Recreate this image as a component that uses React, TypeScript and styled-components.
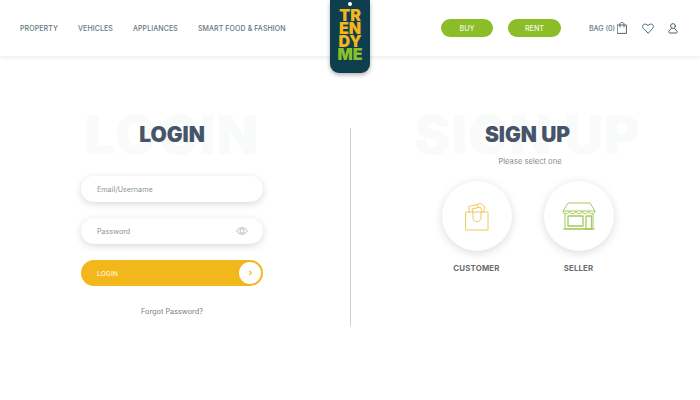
import React from "react";
import styled, { createGlobalStyle } from "styled-components";

const GlobalStyle = createGlobalStyle`
  html, body {
    margin: 0;
    padding: 0;
    background: #fff;
    font-family: "Inter", "Liberation Sans", sans-serif;
  }
`;

const Page = styled.div`
  width: 700px;
  height: 400px;
  overflow: hidden;
  position: relative;
  background: #fff;
`;

const Header = styled.header`
  height: 56px;
  display: flex;
  align-items: center;
  padding: 0 20px;
  box-shadow: 0 2px 4px rgba(30, 40, 50, 0.08);
`;

const Nav = styled.nav`
  display: flex;
  gap: 20px;
  width: 421px;
  flex: none;
`;

const NavLink = styled.span`
  font-size: 7px;
  font-weight: 500;
  color: #647680;
  letter-spacing: 0.1px;
  white-space: nowrap;
`;

const Tag = styled.div`
  position: absolute;
  left: 330px;
  top: 0;
  width: 40px;
  height: 73px;
  background: #0f3f4f;
  border-radius: 0 0 9px 9px;
  box-shadow: 0 2px 4px rgba(0, 0, 0, 0.3);
  display: flex;
  flex-direction: column;
  align-items: center;
  padding-top: 2px;
  box-sizing: border-box;
`;

const TagHole = styled.span`
  width: 4px;
  height: 4px;
  border-radius: 50%;
  background: #fff;
  margin-bottom: 3px;
`;

const TagLine = styled.span<{ $green?: boolean }>`
  font-size: 16px;
  line-height: 13px;
  font-weight: 900;
  letter-spacing: 0;
  color: ${(p) => (p.$green ? "#8cc02b" : "#f3b71b")};
`;

const PillButton = styled.div<{ $width: number; $gap: number }>`
  width: ${(p) => p.$width}px;
  height: 18px;
  flex: none;
  margin-right: ${(p) => p.$gap}px;
  border-radius: 9px;
  background: #8abd26;
  color: #f4f8e6;
  font-size: 7.2px;
  font-weight: 500;
  display: flex;
  align-items: center;
  justify-content: center;
`;

const Bag = styled.span`
  width: 26px;
  flex: none;
  font-size: 7px;
  font-weight: 500;
  color: #647680;
  margin-right: 2px;
  white-space: nowrap;
`;

const HeaderIcon = styled.svg<{ $gap?: number }>`
  display: block;
  flex: none;
  margin-right: ${(p) => p.$gap ?? 0}px;
  fill: none;
  stroke: #4b6673;
  stroke-width: 1;
  stroke-linecap: round;
  stroke-linejoin: round;
`;

const Main = styled.main`
  display: grid;
  grid-template-columns: 350px 1px 1fr;
  padding-top: 72px;
`;

const Divider = styled.div`
  width: 1px;
  height: 198px;
  background: #cfd2d5;
`;

const LoginColumn = styled.section`
  display: flex;
  flex-direction: column;
  align-items: center;
  padding-right: 6px;
`;

const SignupColumn = styled.section`
  display: flex;
  flex-direction: column;
  align-items: center;
  padding-left: 4px;
`;

const TitleBlock = styled.div`
  position: relative;
  height: 14px;
  display: flex;
  align-items: center;
  justify-content: center;
`;

const GhostTitle = styled.span`
  position: absolute;
  left: 50%;
  top: 50%;
  transform: translate(-50%, -50%);
  font-size: 54px;
  line-height: 40px;
  font-weight: 900;
  letter-spacing: 1px;
  color: #f9fafa;
  white-space: nowrap;
`;

const Title = styled.h1`
  position: relative;
  margin: 0;
  font-size: 21px;
  line-height: 14px;
  font-weight: 900;
  color: #46546a;
  letter-spacing: 0;
  white-space: nowrap;
`;

const Field = styled.div<{ $top: number }>`
  width: 182px;
  height: 26px;
  box-sizing: border-box;
  padding: 0 15px 0 16px;
  border-radius: 13px;
  background: #fff;
  box-shadow: 0 2px 7px rgba(40, 50, 60, 0.18);
  display: flex;
  align-items: center;
  justify-content: space-between;
  font-size: 7.2px;
  color: #8a959a;
  margin-top: ${(p) => p.$top}px;
`;

const LoginButton = styled.div`
  width: 182px;
  height: 26px;
  margin-top: 16px;
  box-sizing: border-box;
  padding: 0 2px 0 16px;
  border-radius: 13px;
  background: #f2b71a;
  color: #fdf3d2;
  font-size: 6.8px;
  font-weight: 500;
  display: flex;
  align-items: center;
  justify-content: space-between;
`;

const ArrowCircle = styled.span`
  width: 22px;
  height: 22px;
  border-radius: 50%;
  background: #fff;
  display: flex;
  align-items: center;
  justify-content: center;
`;

const Forgot = styled.div`
  margin-top: 21px;
  font-size: 7.3px;
  color: #7a8184;
`;

const Hint = styled.div`
  margin-top: 15px;
  padding-left: 5px;
  font-size: 7.6px;
  color: #888e91;
`;

const Choices = styled.div`
  display: flex;
  gap: 32px;
  margin-top: 15px;
`;

const Choice = styled.div`
  display: flex;
  flex-direction: column;
  align-items: center;
`;

const ChoiceCircle = styled.div`
  width: 70px;
  height: 70px;
  border-radius: 50%;
  background: #fff;
  box-shadow: 0 2px 9px rgba(40, 40, 40, 0.17);
  display: flex;
  align-items: center;
  justify-content: center;
`;

const ChoiceLabel = styled.div`
  margin-top: 12px;
  font-size: 7.8px;
  font-weight: 700;
  letter-spacing: 0.2px;
  color: #6a6d70;
`;

const App = () => {
  return (
    <Page>
      <GlobalStyle />
      <Header>
        <Nav>
          <NavLink>PROPERTY</NavLink>
          <NavLink>VEHICLES</NavLink>
          <NavLink>APPLIANCES</NavLink>
          <NavLink>SMART FOOD &amp; FASHION</NavLink>
        </Nav>
        <PillButton $width={52} $gap={15}>BUY</PillButton>
        <PillButton $width={53} $gap={28}>RENT</PillButton>
        <Bag>BAG (0)</Bag>
        <HeaderIcon width="10" height="12" viewBox="0 0 10 12" $gap={15}>
          <path d="M.6 3h8.800v8.400H.6z" />
          <path d="M3 5V2C3 1 4 .5 5 .5S7 1 7 2v3" />
        </HeaderIcon>
        <HeaderIcon width="12" height="11" viewBox="0 0 12 11" $gap={14}>
          <path d="M6 10 1.400 5.500C.2 4.300.4 2.500 1.600 1.500 2.800.7 4.600 1 6 2.700 7.400 1 9.200.7 10.400 1.500c1.200 1 1.400 2.800.2 4z" />
        </HeaderIcon>
        <HeaderIcon width="10" height="11" viewBox="0 0 10 11">
          <circle cx="5" cy="3" r="2.400" />
          <path d="M3.500 5.400 1 8.200c-.6.700-.2 1.800.8 1.800h6.400c1 0 1.400-1.100.8-1.800L6.500 5.400" />
        </HeaderIcon>
      </Header>

      <Tag>
        <TagHole />
        <TagLine>TR</TagLine>
        <TagLine>EN</TagLine>
        <TagLine>DY</TagLine>
        <TagLine $green>ME</TagLine>
      </Tag>

      <Main>
        <LoginColumn>
          <TitleBlock>
            <GhostTitle>LOGIN</GhostTitle>
            <Title>LOGIN</Title>
          </TitleBlock>
          <Field $top={34}>Email/Username</Field>
          <Field $top={16}>
            Password
            <svg width="12" height="8" viewBox="0 0 12 8" fill="none" stroke="#a3abaf" strokeWidth="0.8">
              <path d="M.6 4C2 1.800 3.900.7 6 .7s4 1.100 5.400 3.300C10 6.200 8.100 7.300 6 7.300S2 6.200.6 4z" />
              <circle cx="6" cy="4" r="2.100" />
            </svg>
          </Field>
          <LoginButton>
            LOGIN
            <ArrowCircle>
              <svg width="5" height="6" viewBox="0 0 5 6" fill="none" stroke="#f2b71a" strokeWidth="1.100">
                <path d="M1.200.8 3.500 3 1.200 5.200" />
              </svg>
            </ArrowCircle>
          </LoginButton>
          <Forgot>Forgot Password?</Forgot>
        </LoginColumn>

        <Divider />

        <SignupColumn>
          <TitleBlock>
            <GhostTitle>SIGN UP</GhostTitle>
            <Title>SIGN UP</Title>
          </TitleBlock>
          <Hint>Please select one</Hint>
          <Choices>
            <Choice>
              <ChoiceCircle>
                <svg width="24" height="29" viewBox="0 0 24 29" fill="none" stroke="#f0c95a" strokeWidth="1" strokeLinejoin="round" strokeLinecap="round">
                  <path d="M1 10h22v18H1z" />
                  <path d="M4.500 10 3.500 4.500 12 2.500l1 2" />
                  <path d="M12 3 15 1l5 4-1.500 5" />
                  <path d="M7.500 10 7 7l8.500-2 1.500 5" />
                  <path d="M8 10v6c0 5 8 5 8 0v-6" />
                </svg>
              </ChoiceCircle>
              <ChoiceLabel>CUSTOMER</ChoiceLabel>
            </Choice>
            <Choice>
              <ChoiceCircle>
                <svg width="34" height="28" viewBox="0 0 34 28" fill="none" stroke="#a3cb5e" strokeWidth="1" strokeLinejoin="round">
                  <path d="M6 1h22l5 8H1z" />
                  <path d="M1 9c0 3.500 6.400 3.500 6.400 0 0 3.500 6.400 3.500 6.400 0 0 3.500 6.400 3.500 6.400 0 0 3.500 6.400 3.500 6.400 0 0 3.500 6.400 3.500 6.400 0" />
                  <path d="M3 12v15h28V12" />
                  <path d="M6 14h15v10H6z" strokeWidth="1.300" />
                  <path d="M24 14h5.500v13H24z" strokeWidth="1.300" />
                  <path d="M1.500 27h31" strokeWidth="1.300" />
                </svg>
              </ChoiceCircle>
              <ChoiceLabel>SELLER</ChoiceLabel>
            </Choice>
          </Choices>
        </SignupColumn>
      </Main>
    </Page>
  );
};

export default App;
